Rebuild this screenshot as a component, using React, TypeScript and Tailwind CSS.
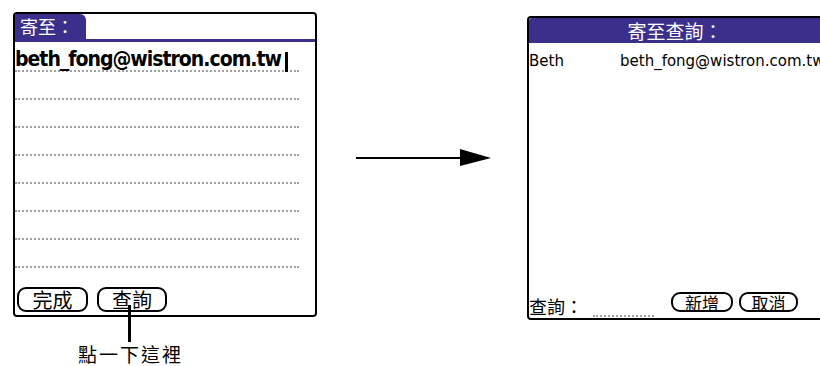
import React from "react";

const cjk = { fontFamily: '"Noto Sans CJK TC", "Noto Sans", sans-serif' };
const lat = { fontFamily: '"DejaVu Sans", "Noto Sans CJK TC", sans-serif' };
const latBold = { fontFamily: '"DejaVu Sans Condensed", "DejaVu Sans", sans-serif' };

function PalmButton({ label, w, h, size }: { label: string; w: string; h: string; size: string }) {
  return (
    <div
      className={`${w} ${h} ${size} border-2 border-black rounded-[9px] flex items-center justify-center leading-none text-black bg-white`}
      style={cjk}
    >
      {label}
    </div>
  );
}

export default function App() {
  const rows = [0, 1, 2, 3, 4, 5, 6];
  return (
    <div className="w-[820px] h-[366px] bg-white overflow-hidden flex flex-row items-start">
      {/* Left screen */}
      <div className="ml-[13px] mt-[12px] w-[304px] flex flex-col shrink-0">
        <div className="h-[305px] border-2 border-black rounded-[4px] flex flex-col bg-white">
          <div className="h-[28px] flex border-b-[3px] border-[#3b2f8c]">
            <div
              className="w-[71px] h-[25px] bg-[#3b2f8c] rounded-tr-[6px] text-white text-[18px] leading-none pl-[5px] pt-[3px] whitespace-nowrap"
              style={cjk}
            >
              寄至：
            </div>
          </div>
          <div className="w-[284px] h-[30px] border-b-2 border-dotted border-[#a0a0a0] flex items-end">
            <span className="text-[21px] font-bold leading-none text-black tracking-[-1px]" style={latBold}>
              beth_fong@wistron.com.tw
            </span>
            <span className="inline-block w-[3px] h-[20px] bg-black ml-[4px] mb-[-2px] relative z-10" />
          </div>
          {rows.map((r) => (
            <div key={r} className="w-[284px] h-[28px] shrink-0 border-b-2 border-dotted border-[#a0a0a0]" />
          ))}
          <div className="flex flex-row gap-[9px] pl-[2px] pt-[19px]">
            <PalmButton label="完成" w="w-[71px]" h="h-[25px]" size="text-[20px]" />
            <PalmButton label="查詢" w="w-[70px]" h="h-[25px]" size="text-[20px]" />
          </div>
        </div>
        <div className="ml-[64px] w-[105px] flex flex-col items-center">
          <div className="w-[3px] h-[37px] -mt-[12px] bg-black relative z-10" />
          <div className="text-[19px] leading-none mt-[2px] whitespace-nowrap tracking-[2px] pl-[2px] text-black" style={cjk}>
            點一下這裡
          </div>
        </div>
      </div>

      {/* Arrow */}
      <div className="ml-[39px] mt-[149px] shrink-0">
        <svg width="135" height="18" viewBox="0 0 135 18">
          <line x1="0" y1="9" x2="106" y2="9" stroke="black" strokeWidth="2" />
          <polygon points="104,0 135,9 104,17" fill="black" />
        </svg>
      </div>

      {/* Right screen */}
      <div className="ml-[36px] mt-[16px] w-[304px] h-[304px] shrink-0 border-2 border-black rounded-[4px] flex flex-col bg-white">
        <div
          className="h-[25px] bg-[#3b2f8c] rounded-tl-[3px] text-white text-[19px] leading-none flex items-center justify-center pr-[8px]"
          style={cjk}
        >
          寄至查詢：
        </div>
        <div className="flex flex-row pt-[11px] text-[15px] leading-none text-black whitespace-nowrap" style={lat}>
          <span className="w-[91px]">Beth</span>
          <span>beth_fong@wistron.com.tw</span>
        </div>
        <div className="flex-1" />
        <div className="flex flex-row items-end pb-[2px]">
          <span className="text-[18px] leading-none text-black whitespace-nowrap mb-[1px]" style={cjk}>
            查詢：
          </span>
          <div className="w-[61px] ml-[10px] border-b-2 border-dotted border-[#a0a0a0] mb-[-1px]" />
          <div className="flex flex-row gap-[6px] ml-[17px] mb-[4px]">
            <PalmButton label="新增" w="w-[62px]" h="h-[20px]" size="text-[17px]" />
            <PalmButton label="取消" w="w-[59px]" h="h-[20px]" size="text-[17px]" />
          </div>
        </div>
      </div>
    </div>
  );
}
